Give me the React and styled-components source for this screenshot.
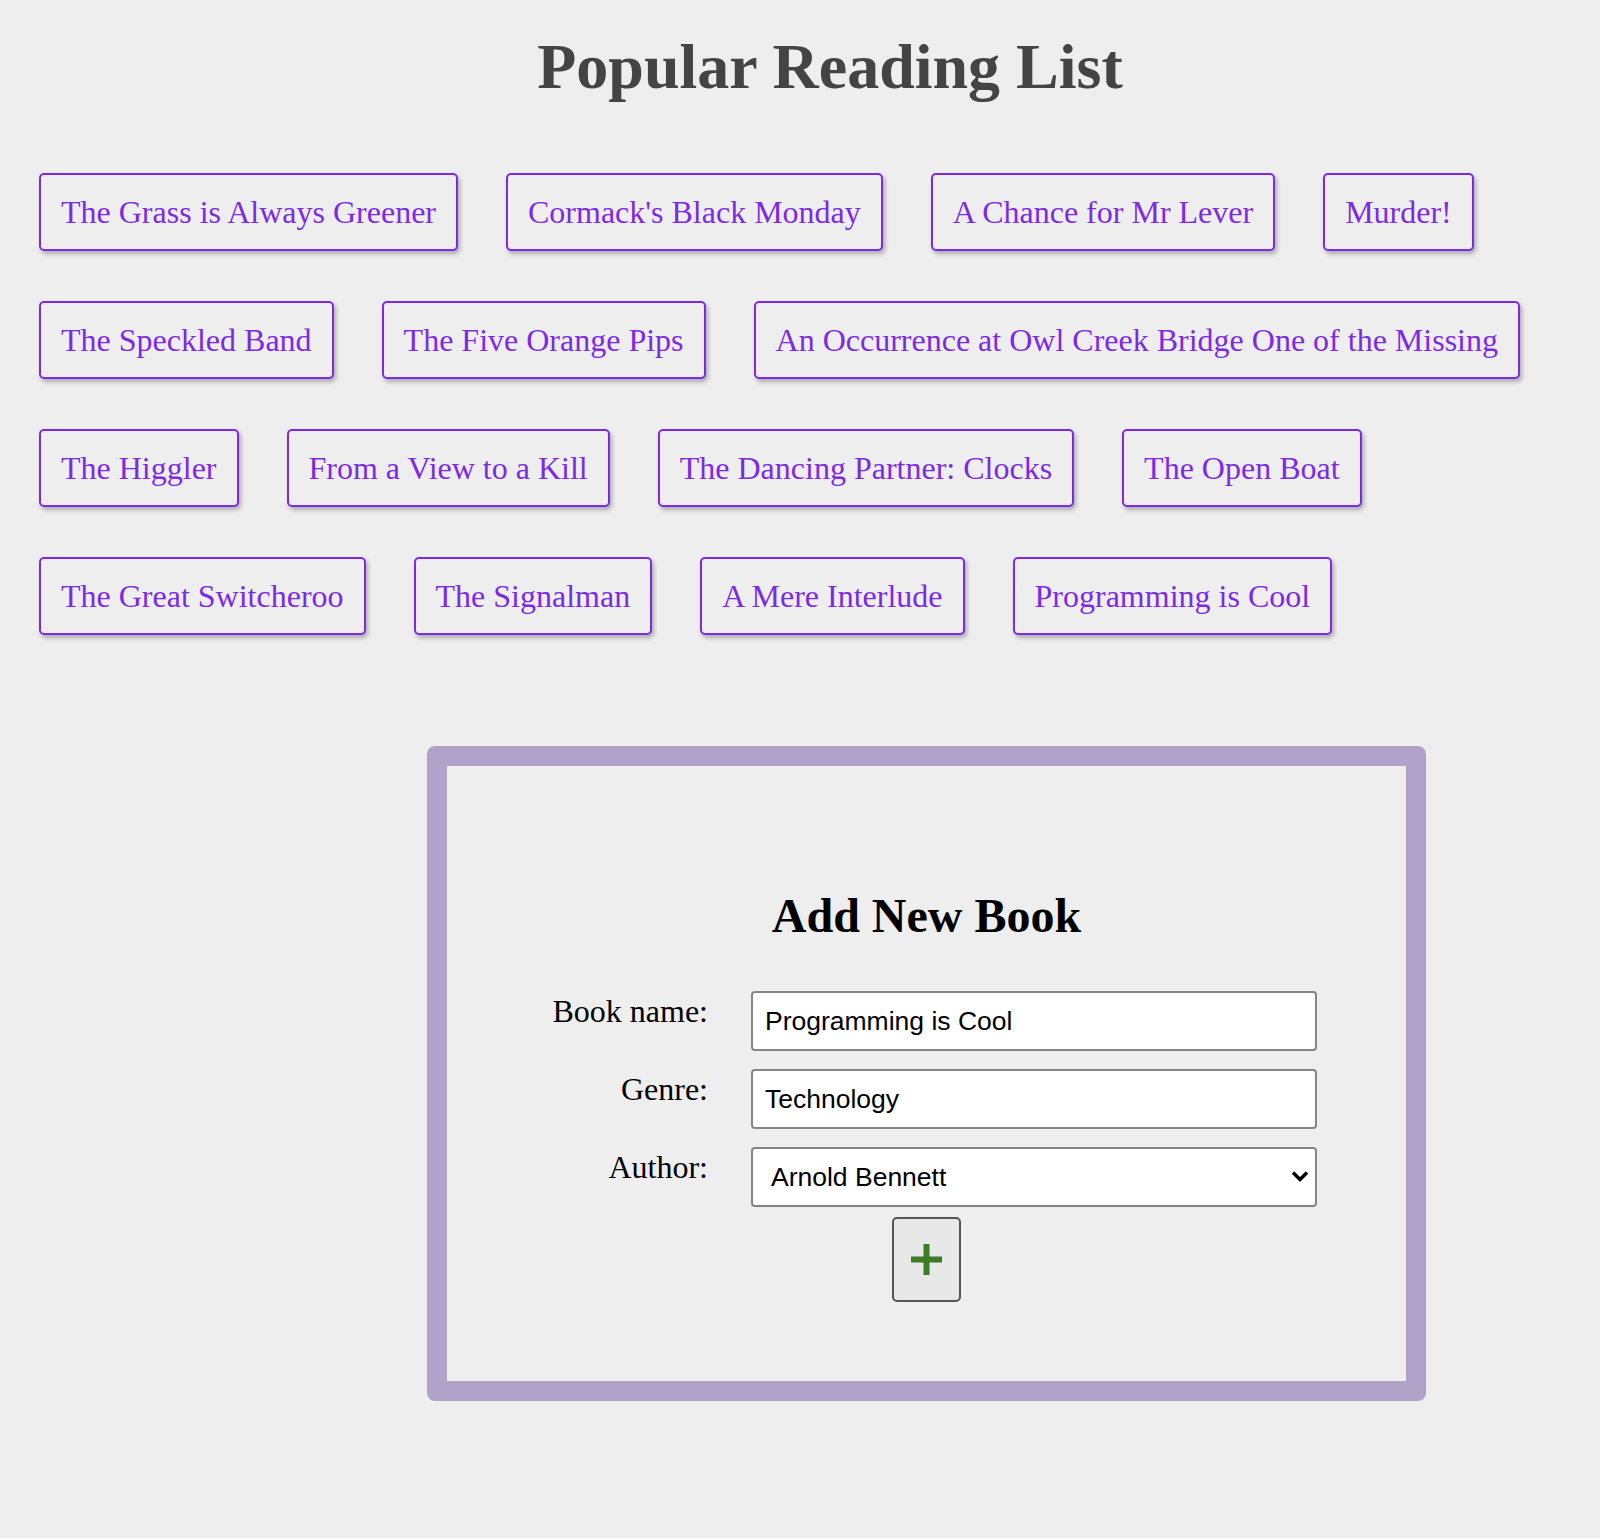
import React, { useState } from "react";
import styled, { createGlobalStyle } from "styled-components";

const GlobalStyle = createGlobalStyle`
  html, body {
    margin: 0;
    padding: 0;
    background: #eeeeee;
  }
  body {
    font-family: "Liberation Serif", "Times New Roman", serif;
  }
  * { box-sizing: border-box; }
`;

const Page = styled.div`
  width: 1600px;
  min-height: 1538px;
  background: #eeeeee;
`;

const Title = styled.h1`
  margin: 0;
  padding: 30px 0 0 60px;
  text-align: center;
  font-family: "Liberation Serif", "Times New Roman", serif;
  font-weight: bold;
  font-size: 64px;
  line-height: 74px;
  color: #444444;
`;

const BookList = styled.ul`
  list-style: none;
  margin: 69px 0 0 0;
  padding: 0 40px 0 39px;
  display: flex;
  flex-wrap: wrap;
  row-gap: 50px;
  column-gap: 48px;
`;

const BookItem = styled.li`
  border: 2px solid #7d2ae6;
  border-radius: 5px;
  padding: 18px 20px;
  font-size: 32px;
  line-height: 38px;
  color: #7d2ae6;
  background: #eeeeee;
  box-shadow: 2px 3px 4px rgba(0, 0, 0, 0.28);
  white-space: nowrap;
  cursor: pointer;
`;

const FormBox = styled.div`
  margin: 111px 0 0 427px;
  width: 999px;
  border: 20px solid #b0a2c9;
  border-radius: 8px;
  padding: 122px 0 79px 0;
  display: flex;
  flex-direction: column;
  align-items: center;
`;

const FormTitle = styled.h2`
  margin: 0 0 47px 0;
  font-family: "Liberation Serif", "Times New Roman", serif;
  font-weight: bold;
  font-size: 48px;
  line-height: 56px;
  color: #000;
  text-align: center;
`;

const Fields = styled.div`
  align-self: flex-start;
  display: grid;
  grid-template-columns: 261px 566px;
  column-gap: 43px;
  row-gap: 18px;
`;

const Label = styled.label`
  padding-top: 2px;
  text-align: right;
  font-size: 32px;
  line-height: 37px;
  color: #000;
`;

const TextInput = styled.input`
  height: 60px;
  width: 100%;
  border: 2px solid #858585;
  border-radius: 4px;
  background: #fff;
  padding: 0 12px;
  font-family: "Liberation Sans", Arial, sans-serif;
  font-size: 26.5px;
  color: #000;
  outline: none;
`;

const SelectWrap = styled.div`
  position: relative;
  height: 60px;
`;

const Select = styled.select`
  appearance: none;
  -webkit-appearance: none;
  height: 60px;
  width: 100%;
  border: 2px solid #858585;
  border-radius: 4px;
  background: #fff;
  padding: 0 40px 0 18px;
  font-family: "Liberation Sans", Arial, sans-serif;
  font-size: 26.5px;
  color: #000;
  outline: none;
`;

const Chevron = styled.svg`
  position: absolute;
  right: 8px;
  top: 23px;
  width: 18px;
  height: 13px;
  pointer-events: none;
`;

const AddButton = styled.button`
  margin-top: 10px;
  width: 69px;
  height: 85px;
  background: #e8e8e8;
  border: 2px solid #555555;
  border-radius: 5px;
  display: flex;
  align-items: center;
  justify-content: center;
  padding: 0;
  cursor: pointer;
`;

const books = [
  "The Grass is Always Greener",
  "Cormack's Black Monday",
  "A Chance for Mr Lever",
  "Murder!",
  "The Speckled Band",
  "The Five Orange Pips",
  "An Occurrence at Owl Creek Bridge One of the Missing",
  "The Higgler",
  "From a View to a Kill",
  "The Dancing Partner: Clocks",
  "The Open Boat",
  "The Great Switcheroo",
  "The Signalman",
  "A Mere Interlude",
  "Programming is Cool",
];

export default function App() {
  const [name, setName] = useState("Programming is Cool");
  const [genre, setGenre] = useState("Technology");
  const [author, setAuthor] = useState("Arnold Bennett");

  return (
    <Page>
      <GlobalStyle />
      <Title>Popular Reading List</Title>
      <BookList>
        {books.map((b) => (
          <BookItem key={b}>{b}</BookItem>
        ))}
      </BookList>
      <FormBox>
        <FormTitle>Add New Book</FormTitle>
        <Fields>
          <Label htmlFor="name">Book name:</Label>
          <TextInput id="name" value={name} onChange={(e) => setName(e.target.value)} />
          <Label htmlFor="genre">Genre:</Label>
          <TextInput id="genre" value={genre} onChange={(e) => setGenre(e.target.value)} />
          <Label htmlFor="author">Author:</Label>
          <SelectWrap>
            <Select id="author" value={author} onChange={(e) => setAuthor(e.target.value)}>
              <option>Arnold Bennett</option>
              <option>Arthur Conan Doyle</option>
              <option>Ambrose Bierce</option>
              <option>Neil Gaiman</option>
              <option>Ian Fleming</option>
            </Select>
            <Chevron viewBox="0 0 18 13">
              <path d="M2 2.5 L9 9.5 L16 2.5" fill="none" stroke="#000" strokeWidth="3.4" strokeLinecap="butt" />
            </Chevron>
          </SelectWrap>
        </Fields>
        <AddButton aria-label="Add book">
          <svg width="31" height="31" viewBox="0 0 31 31">
            <rect x="12.5" y="0" width="6" height="31" fill="#3b7d23" />
            <rect x="0" y="12.5" width="31" height="6" fill="#3b7d23" />
          </svg>
        </AddButton>
      </FormBox>
    </Page>
  );
}
